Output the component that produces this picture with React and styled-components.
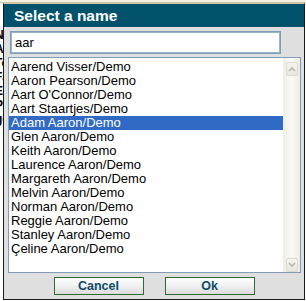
import React, { useState } from "react";
import styled, { createGlobalStyle } from "styled-components";

const names = [
  "Aarend Visser/Demo",
  "Aaron Pearson/Demo",
  "Aart O'Connor/Demo",
  "Aart Staartjes/Demo",
  "Adam Aaron/Demo",
  "Glen Aaron/Demo",
  "Keith Aaron/Demo",
  "Laurence Aaron/Demo",
  "Margareth Aaron/Demo",
  "Melvin Aaron/Demo",
  "Norman Aaron/Demo",
  "Reggie Aaron/Demo",
  "Stanley Aaron/Demo",
  "Çeline Aaron/Demo",
];

const GlobalStyle = createGlobalStyle`
  html, body {
    margin: 0;
    padding: 0;
    background: #fff;
    font-family: "Liberation Sans", Arial, sans-serif;
  }
`;

const Page = styled.div`
  position: relative;
  width: 306px;
  height: 301px;
  overflow: hidden;
  background: #fff;
`;

const TopBand = styled.div`
  height: 2px;
  background: #f3f0df;
  border-bottom: 1px solid #cdc6a8;
`;

// the page behind the dialog, only a sliver shows at the left edge
const BackText = styled.div`
  width: 3px;
  overflow: hidden;
  padding: 26px 0 0 0;
  display: flex;
  flex-direction: column;
  gap: 1px;
  font-size: 12px;
  line-height: 13px;
  color: #000;
  white-space: nowrap;
  font-weight: bold;

  span {
    display: block;
    margin-left: -5px;
  }
`;

const Dialog = styled.div`
  position: absolute;
  left: 3px;
  top: 3px;
  width: 302px;
  height: 297px;
  box-sizing: border-box;
  border: 1px solid #1b1b1b;
  border-top-color: #cdc6a8;
  background: #dfdfdf;
  display: flex;
  flex-direction: column;
`;

const TitleBar = styled.div`
  height: 23px;
  background: #01526a;
  color: #fff;
  font-weight: bold;
  font-size: 15.5px;
  display: flex;
  align-items: center;
  padding-left: 10px;
  padding-top: 1px;
  box-sizing: border-box;
`;

const Body = styled.div`
  flex: 1;
  display: flex;
  flex-direction: column;
  padding: 4px 3px 0 4px;
`;

const SearchInput = styled.input`
  box-sizing: border-box;
  width: 271px;
  height: 23px;
  margin: 0 0 3px 2px;
  border: 1px solid #7f9db9;
  outline: 1px solid #9cb2c8;
  outline-offset: -2px;
  background: #fff;
  padding: 0 4px;
  font-family: "Liberation Sans", Arial, sans-serif;
  font-size: 13px;
  color: #000;
`;

const ListBox = styled.div`
  box-sizing: border-box;
  width: 293px;
  height: 216px;
  border: 1px solid #7f9db9;
  background: #fff;
  display: flex;
`;

const Items = styled.div`
  flex: 1;
  padding-top: 2px;
  display: flex;
  flex-direction: column;
`;

const Item = styled.div`
  height: 14px;
  line-height: 14px;
  font-size: 13px;
  padding-left: 2px;
  white-space: nowrap;
  color: ${(p) => (p.selected ? "#fff" : "#000")};
  background: ${(p) => (p.selected ? "#316ac5" : "transparent")};
  cursor: default;
`;

const ScrollTrack = styled.div`
  width: 17px;
  background: linear-gradient(to right, #efede6, #fbfaf7 50%, #eeebe3);
  display: flex;
  flex-direction: column;
  justify-content: space-between;
  align-items: center;
  padding: 4px 0 0 0;
  box-sizing: border-box;
`;

const ScrollButton = styled.div`
  width: 12px;
  height: 14px;
  box-sizing: border-box;
  border: 1px solid #dcd9d0;
  border-radius: 2px;
  background: linear-gradient(#f6f5f1, #e9e7df);
  display: flex;
  align-items: center;
  justify-content: center;
`;

const Footer = styled.div`
  display: flex;
  justify-content: center;
  gap: 21px;
  padding-top: 4px;
  margin-left: -1px;
`;

const Button = styled.button`
  width: 90px;
  height: 18px;
  box-sizing: border-box;
  border: 1px solid #2f6a2f;
  background: linear-gradient(#ffffff, #f0f0f0 50%, #dcdcdc);
  color: #0d4d66;
  font-family: "Liberation Sans", Arial, sans-serif;
  font-weight: bold;
  font-size: 12.5px;
  line-height: 14px;
  padding: 0;
  cursor: pointer;
`;

const Chevron = ({ up }) => (
  <svg width="8" height="6" viewBox="0 0 8 6">
    <path
      d={up ? "M1 5 L4 2 L7 5" : "M1 1 L4 4 L7 1"}
      fill="none"
      stroke="#b8b6ae"
      strokeWidth="1.6"
    />
  </svg>
);

const App = () => {
  const [query, setQuery] = useState("aar");
  const [current, setCurrent] = useState(4);

  return (
    <>
      <GlobalStyle />
      <Page>
        <TopBand />
        <BackText>
          <span>Nal</span>
          <span>Ad</span>
          <span>Te</span>
          <span>Fa</span>
          <span>Em</span>
          <span>Pr</span>
          <span>gg</span>
        </BackText>
        <Dialog>
          <TitleBar>Select a name</TitleBar>
          <Body>
            <SearchInput value={query} onChange={(e) => setQuery(e.target.value)} />
            <ListBox>
              <Items>
                {names.map((name, index) => (
                  <Item
                    key={name}
                    selected={index === current}
                    onClick={() => setCurrent(index)}
                  >
                    {name}
                  </Item>
                ))}
              </Items>
              <ScrollTrack>
                <ScrollButton>
                  <Chevron up />
                </ScrollButton>
                <ScrollButton>
                  <Chevron />
                </ScrollButton>
              </ScrollTrack>
            </ListBox>
            <Footer>
              <Button>Cancel</Button>
              <Button>Ok</Button>
            </Footer>
          </Body>
        </Dialog>
      </Page>
    </>
  );
};

export default App;
